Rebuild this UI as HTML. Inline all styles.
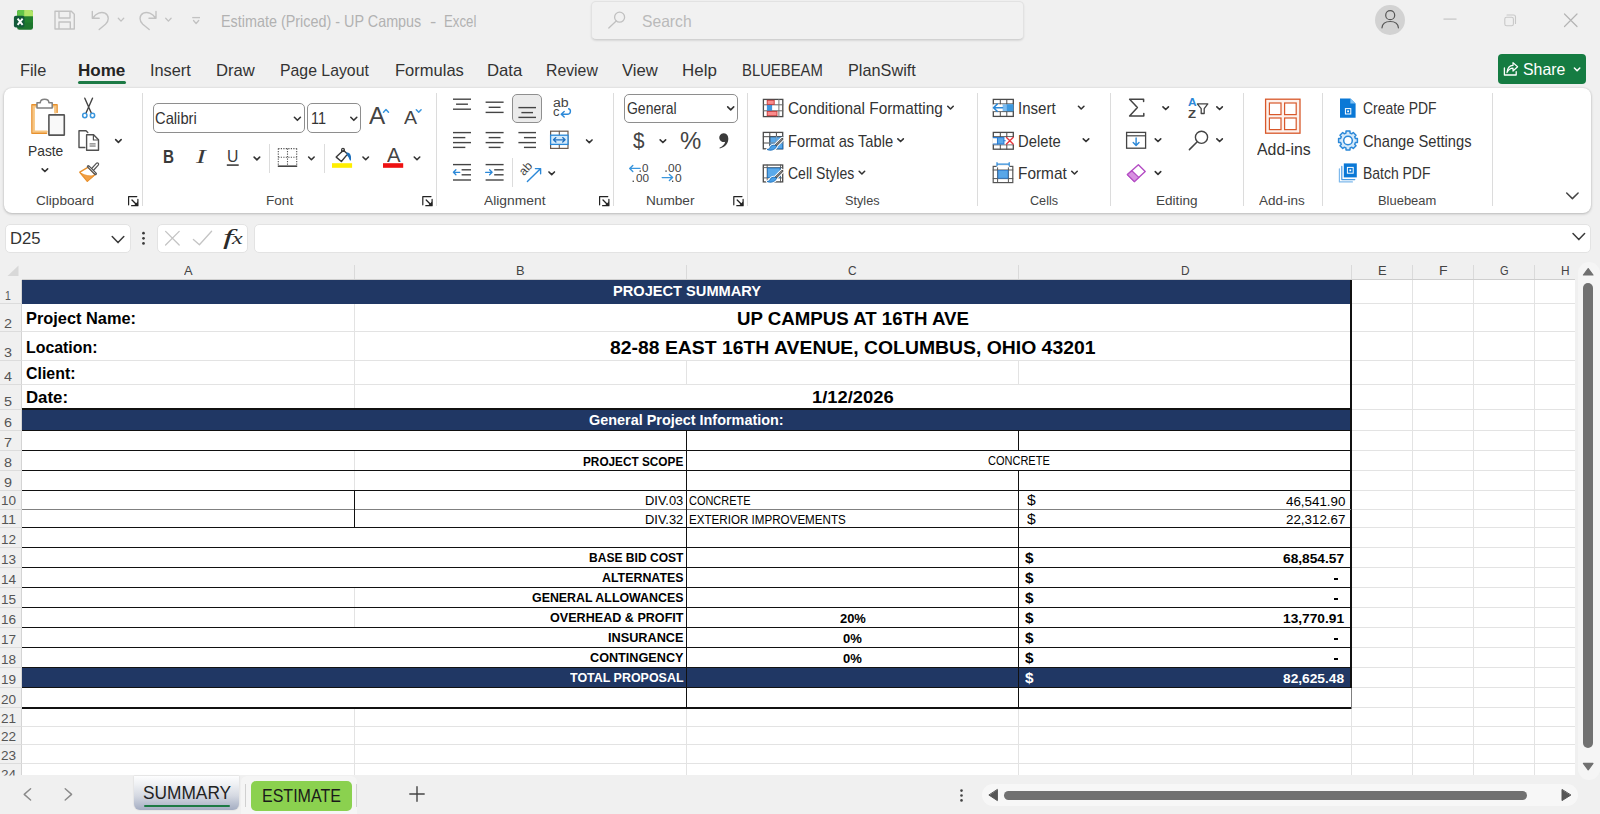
<!DOCTYPE html>
<html lang="en"><head><meta charset="utf-8"><title>Estimate (Priced) - UP Campus - Excel</title>
<style>
html,body{margin:0;padding:0}
body{width:1600px;height:814px;overflow:hidden;background:#f0f0f0;font-family:"Liberation Sans",sans-serif;position:relative}
#app{position:absolute;left:0;top:0;width:1600px;height:814px;overflow:hidden}
#app div{position:absolute;box-sizing:border-box}
.t{position:absolute;white-space:pre;line-height:1;transform-origin:0 0;display:block}
svg.ov{position:absolute;left:0;top:0;pointer-events:none}
</style></head>
<body><div id="app">
<div style="left:591px;top:0.5px;width:433px;height:39.5px;background:#f1f1f1;border:1px solid #e2e2e2;border-bottom-color:#d2d2d2;border-radius:5px;box-shadow:0 1px 2px rgba(0,0,0,.10)"></div>
<div style="left:78px;top:81px;width:48px;height:3px;background:#1d7a45;border-radius:1.5px"></div>
<div style="left:1498px;top:54px;width:88px;height:30px;background:#157c42;border-radius:4px"></div>
<div style="left:4px;top:88px;width:1587px;height:125px;background:#fff;border-radius:8px;box-shadow:0 1px 3px rgba(0,0,0,.22),0 0 2px rgba(0,0,0,.10)"></div>
<div style="left:142.0px;top:93px;width:1px;height:113px;background:#dcdcdc"></div>
<div style="left:436.0px;top:93px;width:1px;height:113px;background:#dcdcdc"></div>
<div style="left:613.0px;top:93px;width:1px;height:113px;background:#dcdcdc"></div>
<div style="left:747.0px;top:93px;width:1px;height:113px;background:#dcdcdc"></div>
<div style="left:977.0px;top:93px;width:1px;height:113px;background:#dcdcdc"></div>
<div style="left:1110.0px;top:93px;width:1px;height:113px;background:#dcdcdc"></div>
<div style="left:1242.5px;top:93px;width:1px;height:113px;background:#dcdcdc"></div>
<div style="left:1322.0px;top:93px;width:1px;height:113px;background:#dcdcdc"></div>
<div style="left:1492.0px;top:93px;width:1px;height:113px;background:#dcdcdc"></div>
<div style="left:4.5px;top:223.5px;width:126px;height:29px;background:#fff;border:1px solid #e3e3e3;border-radius:5px"></div>
<div style="left:157px;top:223.5px;width:91px;height:29px;background:#fff;border:1px solid #e3e3e3;border-radius:5px"></div>
<div style="left:253.5px;top:223.5px;width:1337.5px;height:29px;background:#fff;border:1px solid #e3e3e3;border-radius:5px"></div>
<div style="left:22px;top:280px;width:1553px;height:495px;background:#fff"></div>
<div style="left:0px;top:263px;width:1600px;height:17px;background:#f0f0f0"></div>
<div style="left:354px;top:280px;width:1px;height:495px;background:#e3e3e3"></div>
<div style="left:686px;top:280px;width:1px;height:495px;background:#e3e3e3"></div>
<div style="left:1018px;top:280px;width:1px;height:495px;background:#e3e3e3"></div>
<div style="left:1351px;top:280px;width:1px;height:495px;background:#e3e3e3"></div>
<div style="left:1412px;top:280px;width:1px;height:495px;background:#e3e3e3"></div>
<div style="left:1473px;top:280px;width:1px;height:495px;background:#e3e3e3"></div>
<div style="left:1534px;top:280px;width:1px;height:495px;background:#e3e3e3"></div>
<div style="left:22px;top:303px;width:1553px;height:1px;background:#e3e3e3"></div>
<div style="left:22px;top:331px;width:1553px;height:1px;background:#e3e3e3"></div>
<div style="left:22px;top:360px;width:1553px;height:1px;background:#e3e3e3"></div>
<div style="left:22px;top:384px;width:1553px;height:1px;background:#e3e3e3"></div>
<div style="left:22px;top:409px;width:1553px;height:1px;background:#e3e3e3"></div>
<div style="left:22px;top:430px;width:1553px;height:1px;background:#e3e3e3"></div>
<div style="left:22px;top:450px;width:1553px;height:1px;background:#e3e3e3"></div>
<div style="left:22px;top:470px;width:1553px;height:1px;background:#e3e3e3"></div>
<div style="left:22px;top:490px;width:1553px;height:1px;background:#e3e3e3"></div>
<div style="left:22px;top:508.6px;width:1553px;height:1px;background:#e3e3e3"></div>
<div style="left:22px;top:527px;width:1553px;height:1px;background:#e3e3e3"></div>
<div style="left:22px;top:547px;width:1553px;height:1px;background:#e3e3e3"></div>
<div style="left:22px;top:567px;width:1553px;height:1px;background:#e3e3e3"></div>
<div style="left:22px;top:587px;width:1553px;height:1px;background:#e3e3e3"></div>
<div style="left:22px;top:607px;width:1553px;height:1px;background:#e3e3e3"></div>
<div style="left:22px;top:627px;width:1553px;height:1px;background:#e3e3e3"></div>
<div style="left:22px;top:647px;width:1553px;height:1px;background:#e3e3e3"></div>
<div style="left:22px;top:667px;width:1553px;height:1px;background:#e3e3e3"></div>
<div style="left:22px;top:687px;width:1553px;height:1px;background:#e3e3e3"></div>
<div style="left:22px;top:707px;width:1553px;height:1px;background:#e3e3e3"></div>
<div style="left:22px;top:726px;width:1553px;height:1px;background:#e3e3e3"></div>
<div style="left:22px;top:744px;width:1553px;height:1px;background:#e3e3e3"></div>
<div style="left:22px;top:763px;width:1553px;height:1px;background:#e3e3e3"></div>
<div style="left:22px;top:279px;width:1553px;height:1px;background:#cfcfcf"></div>
<div style="left:21px;top:280px;width:1px;height:495px;background:#d4d4d4"></div>
<div style="left:354px;top:265px;width:1px;height:14px;background:#dadada"></div>
<div style="left:686px;top:265px;width:1px;height:14px;background:#dadada"></div>
<div style="left:1018px;top:265px;width:1px;height:14px;background:#dadada"></div>
<div style="left:1351px;top:265px;width:1px;height:14px;background:#dadada"></div>
<div style="left:1412px;top:265px;width:1px;height:14px;background:#dadada"></div>
<div style="left:1473px;top:265px;width:1px;height:14px;background:#dadada"></div>
<div style="left:1534px;top:265px;width:1px;height:14px;background:#dadada"></div>
<div style="left:0px;top:303px;width:22px;height:1px;background:#dcdcdc"></div>
<div style="left:0px;top:331px;width:22px;height:1px;background:#dcdcdc"></div>
<div style="left:0px;top:360px;width:22px;height:1px;background:#dcdcdc"></div>
<div style="left:0px;top:384px;width:22px;height:1px;background:#dcdcdc"></div>
<div style="left:0px;top:409px;width:22px;height:1px;background:#dcdcdc"></div>
<div style="left:0px;top:430px;width:22px;height:1px;background:#dcdcdc"></div>
<div style="left:0px;top:450px;width:22px;height:1px;background:#dcdcdc"></div>
<div style="left:0px;top:470px;width:22px;height:1px;background:#dcdcdc"></div>
<div style="left:0px;top:490px;width:22px;height:1px;background:#dcdcdc"></div>
<div style="left:0px;top:508.6px;width:22px;height:1px;background:#dcdcdc"></div>
<div style="left:0px;top:527px;width:22px;height:1px;background:#dcdcdc"></div>
<div style="left:0px;top:547px;width:22px;height:1px;background:#dcdcdc"></div>
<div style="left:0px;top:567px;width:22px;height:1px;background:#dcdcdc"></div>
<div style="left:0px;top:587px;width:22px;height:1px;background:#dcdcdc"></div>
<div style="left:0px;top:607px;width:22px;height:1px;background:#dcdcdc"></div>
<div style="left:0px;top:627px;width:22px;height:1px;background:#dcdcdc"></div>
<div style="left:0px;top:647px;width:22px;height:1px;background:#dcdcdc"></div>
<div style="left:0px;top:667px;width:22px;height:1px;background:#dcdcdc"></div>
<div style="left:0px;top:687px;width:22px;height:1px;background:#dcdcdc"></div>
<div style="left:0px;top:707px;width:22px;height:1px;background:#dcdcdc"></div>
<div style="left:0px;top:726px;width:22px;height:1px;background:#dcdcdc"></div>
<div style="left:0px;top:744px;width:22px;height:1px;background:#dcdcdc"></div>
<div style="left:0px;top:763px;width:22px;height:1px;background:#dcdcdc"></div>
<div style="left:22px;top:280px;width:1329px;height:24px;background:#203764"></div>
<div style="left:22px;top:410px;width:1329px;height:21px;background:#203764"></div>
<div style="left:22px;top:668px;width:1329px;height:20px;background:#203764"></div>
<div style="left:355px;top:304px;width:995px;height:27px;background:#fff"></div>
<div style="left:355px;top:332px;width:995px;height:28px;background:#fff"></div>
<div style="left:355px;top:385px;width:995px;height:23px;background:#fff"></div>
<div style="left:23px;top:431px;width:995px;height:19px;background:#fff"></div>
<div style="left:687px;top:451px;width:663px;height:19px;background:#fff"></div>
<div style="left:23px;top:528px;width:663px;height:19px;background:#fff"></div>
<div style="left:23px;top:548px;width:663px;height:19px;background:#fff"></div>
<div style="left:23px;top:568px;width:663px;height:19px;background:#fff"></div>
<div style="left:23px;top:628px;width:663px;height:19px;background:#fff"></div>
<div style="left:23px;top:648px;width:663px;height:19px;background:#fff"></div>
<div style="left:23px;top:688px;width:663px;height:18.7px;background:#fff"></div>
<div style="left:22px;top:408px;width:1329px;height:2px;background:#111"></div>
<div style="left:22px;top:706.7px;width:1329px;height:2px;background:#111"></div>
<div style="left:1350px;top:280px;width:2px;height:408px;background:#111"></div>
<div style="left:1350.6px;top:688px;width:1.2px;height:20.700000000000045px;background:#808080"></div>
<div style="left:22px;top:430px;width:1329px;height:1px;background:#111"></div>
<div style="left:22px;top:450px;width:1329px;height:1px;background:#111"></div>
<div style="left:22px;top:470px;width:1329px;height:1px;background:#111"></div>
<div style="left:22px;top:490px;width:1329px;height:1px;background:#111"></div>
<div style="left:22px;top:527px;width:1329px;height:1px;background:#111"></div>
<div style="left:22px;top:547px;width:1329px;height:1px;background:#111"></div>
<div style="left:22px;top:567px;width:1329px;height:1px;background:#111"></div>
<div style="left:22px;top:587px;width:1329px;height:1px;background:#111"></div>
<div style="left:22px;top:607px;width:1329px;height:1px;background:#111"></div>
<div style="left:22px;top:627px;width:1329px;height:1px;background:#111"></div>
<div style="left:22px;top:647px;width:1329px;height:1px;background:#111"></div>
<div style="left:22px;top:667px;width:1329px;height:1px;background:#111"></div>
<div style="left:22px;top:687px;width:1329px;height:1px;background:#111"></div>
<div style="left:22px;top:508.6px;width:1329px;height:1px;background:#808080"></div>
<div style="left:686px;top:431px;width:1px;height:276px;background:#111"></div>
<div style="left:1018px;top:431px;width:1px;height:20px;background:#111"></div>
<div style="left:1018px;top:471px;width:1px;height:236px;background:#111"></div>
<div style="left:354px;top:490px;width:1px;height:38px;background:#111"></div>
<div style="left:1333.8px;top:578.2px;width:4.2px;height:1.9px;background:#000"></div>
<div style="left:1333.8px;top:598.2px;width:4.2px;height:1.9px;background:#000"></div>
<div style="left:1333.8px;top:638.2px;width:4.2px;height:1.9px;background:#000"></div>
<div style="left:1333.8px;top:658.2px;width:4.2px;height:1.9px;background:#000"></div>
<div style="left:0px;top:775px;width:1600px;height:39px;background:#f0f0f0"></div>
<div style="left:240.5px;top:775.5px;width:116.5px;height:38.5px;background:#f5f5f5;border-radius:6px 6px 0 0"></div>
<div style="left:133.5px;top:776px;width:105.5px;height:33.5px;background:linear-gradient(#fdfdfe 0%,#eef0f3 25%,#d5d9e2 58%,#a4adc2 100%);border-radius:0 0 6px 6px;box-shadow:0 0 1.5px rgba(0,0,0,.22)"></div>
<div style="left:143.8px;top:804.6px;width:86.4px;height:2.4px;background:#1d7a45;border-radius:1px"></div>
<div style="left:245px;top:784px;width:1px;height:23px;background:#d0d0d0"></div>
<div style="left:251px;top:781px;width:100.5px;height:29.5px;background:#8bd14f;border-radius:5px"></div>
<div style="left:356.2px;top:784px;width:1px;height:23px;background:#d0d0d0"></div>
<div style="left:982px;top:784px;width:596px;height:22px;background:#f7f7f7;border-radius:11px"></div>
<div style="left:1004px;top:790.5px;width:522.5px;height:9.5px;background:#717171;border-radius:5px"></div>
<div style="left:1578px;top:262px;width:22px;height:518px;background:#f5f5f5;border-radius:11px"></div>
<div style="left:1583.2px;top:283px;width:9.8px;height:465px;background:#717171;border-radius:5px"></div>
<div style="left:153px;top:103px;width:151.5px;height:29.5px;background:#fff;border:1px solid #8e8e8e;border-radius:5px"></div>
<div style="left:307.3px;top:103px;width:54px;height:29.5px;background:#fff;border:1px solid #8e8e8e;border-radius:5px"></div>
<div style="left:269px;top:143.5px;width:1px;height:29px;background:#dcdcdc"></div>
<div style="left:324.3px;top:143.5px;width:1px;height:29px;background:#dcdcdc"></div>
<div style="left:512.4px;top:93.6px;width:29.4px;height:29px;background:#ebebeb;border:1px solid #8f8f8f;border-radius:5px"></div>
<div style="left:512px;top:158px;width:1px;height:29px;background:#dcdcdc"></div>
<div style="left:624.4px;top:93.6px;width:113.4px;height:29px;background:#fff;border:1px solid #8e8e8e;border-radius:5px"></div>
<svg class="ov" width="1600" height="814" viewBox="0 0 1600 814">
<path d="M18.5 265.5L18.5 276L7.5 276Z" fill="#d8d8d8"/>
<g><rect x="17.1" y="9.9" width="15.9" height="19.9" rx="2.2" fill="#1d762d"/><path d="M19.3 9.9H24.1V16.6H17.1V12.1A2.2 2.2 0 0 1 19.3 9.9Z" fill="#62c649"/><path d="M24.1 9.9H30.8A2.2 2.2 0 0 1 33 12.1V16.6H24.1Z" fill="#b0e566"/><rect x="24.1" y="16.6" width="8.9" height="6" fill="#21802f"/><rect x="13.9" y="15.8" width="10.6" height="11.8" rx="2" fill="#135a3a"/><path d="M17.6 18.7L22.6 24.8M22.6 18.7L17.6 24.8" stroke="#fff" stroke-width="1.9" fill="none"/></g>
<path d="M55 11.2H71.3L74.3 14.2V29H55ZM59 11.2V18H70V11.2M59 29V22H70.3V29" fill="none" stroke="#c2c2c2" stroke-width="1.4" stroke-linejoin="round" stroke-linecap="round" />
<path d="M92.3 11.5V18.3H99.2M92.8 18C96 13.6 101 11.2 105 13.2C109.5 15.6 109 21 105.5 24.2L99.2 29.5" fill="none" stroke="#c2c2c2" stroke-width="1.4" stroke-linejoin="round" stroke-linecap="round" />
<path d="M118.30 18.25L121.00 21.15L123.70 18.25" fill="none" stroke="#c2c2c2" stroke-width="1.3" stroke-linecap="round" stroke-linejoin="round"/>
<path d="M156 11.5V18.3H149M155.6 18C152.4 13.6 147.4 11.2 143.3 13.2C138.8 15.6 139.3 21 142.8 24.2L149.2 29.5" fill="none" stroke="#c2c2c2" stroke-width="1.4" stroke-linejoin="round" stroke-linecap="round" />
<path d="M165.70 18.25L168.40 21.15L171.10 18.25" fill="none" stroke="#c2c2c2" stroke-width="1.3" stroke-linecap="round" stroke-linejoin="round"/>
<path d="M192.2 17.6L200 17.6" stroke="#c2c2c2" stroke-width="1.3" stroke-linecap="butt" fill="none"/>
<path d="M193.50 20.55L196.10 23.45L198.70 20.55" fill="none" stroke="#c2c2c2" stroke-width="1.3" stroke-linecap="round" stroke-linejoin="round"/>
<circle cx="619.6" cy="17.2" r="5" fill="none" stroke="#c0c0c0" stroke-width="1.3"/>
<path d="M616.2 21L608.8 28" stroke="#c0c0c0" stroke-width="1.3" stroke-linecap="round" fill="none"/>
<circle cx="1390" cy="20" r="15" fill="#d2d2d2"/>
<circle cx="1390.2" cy="15.2" r="4.5" fill="none" stroke="#555" stroke-width="1.2"/>
<path d="M1382 27.8C1382.4 23 1385.6 21.5 1390.2 21.5C1394.8 21.5 1398 23 1398.4 27.8" fill="none" stroke="#555" stroke-width="1.2" stroke-linejoin="round" stroke-linecap="round" />
<path d="M1443.5 19.1L1456.5 19.1" stroke="#c4c4c4" stroke-width="1.2" stroke-linecap="butt" fill="none"/>
<rect x="1504.8" y="17.2" width="8.6" height="8.6" fill="none" stroke="#c8c8c8" stroke-width="1.1" rx="1.8" />
<path d="M1507 15H1513.5A2 2 0 0 1 1515.5 17V23.5" fill="none" stroke="#c8c8c8" stroke-width="1.1" stroke-linejoin="round" stroke-linecap="round" />
<path d="M1564.5 14L1577 26.5M1577 14L1564.5 26.5" fill="none" stroke="#b4b4b4" stroke-width="1.2" stroke-linejoin="round" stroke-linecap="round" />
<path d="M1504.4 68V75H1516.2V71.6" fill="none" stroke="#fff" stroke-width="1.3" stroke-linejoin="round" stroke-linecap="round" stroke-linecap="butt" stroke-linejoin="miter"/>
<path d="M1507 72.6C1507.4 68.2 1509.6 65.6 1513 65.4V62.6L1517.6 66.8L1513 71V68.2C1510.6 68.2 1508.6 69.4 1507 72.6Z" fill="none" stroke="#fff" stroke-width="1.2" stroke-linejoin="round" stroke-linecap="round" />
<path d="M1574.40 68.00L1577.10 70.80L1579.80 68.00" fill="none" stroke="#fff" stroke-width="1.5" stroke-linecap="round" stroke-linejoin="round"/>
<path d="M36.6 106.3H33.7V131.6H46.6" fill="none" stroke="#f8c681" stroke-width="2.4" stroke-linejoin="round" stroke-linecap="round" stroke-linecap="butt"/>
<path d="M36.6 104.7H31.9V133.2H46.6" fill="none" stroke="#e8912d" stroke-width="1.4" stroke-linejoin="round" stroke-linecap="round" />
<path d="M52.6 106.3H55.3V112.4" fill="none" stroke="#f8c681" stroke-width="2.4" stroke-linejoin="round" stroke-linecap="round" />
<path d="M52.6 104.7H57.1V112.4" fill="none" stroke="#e8912d" stroke-width="1.4" stroke-linejoin="round" stroke-linecap="round" />
<path d="M37 108H52.2V102.8H48.9C48.9 100.6 47.2 99.3 44.6 99.3C42 99.3 40.3 100.6 40.3 102.8H37Z" fill="#fff" stroke="#808080" stroke-width="1.5" stroke-linejoin="round" stroke-linecap="round" />
<rect x="48.9" y="114.9" width="15.4" height="20.2" fill="#f9f9f9" stroke="#555" stroke-width="1.6" rx="0.4" />
<path d="M42.15 168.85L44.90 171.55L47.65 168.85" fill="none" stroke="#333" stroke-width="1.6" stroke-linecap="round" stroke-linejoin="round"/>
<path d="M84.8 98.2L91.4 113.2M92.5 98.2L85.9 113.2" fill="none" stroke="#444" stroke-width="1.4" stroke-linejoin="round" stroke-linecap="round" />
<circle cx="84.8" cy="115.5" r="2.15" fill="#fff" stroke="#3a96dd" stroke-width="1.5"/>
<circle cx="92.5" cy="115.5" r="2.15" fill="#fff" stroke="#3a96dd" stroke-width="1.5"/>
<path d="M84.8 147.5H79V130.7H86L87.8 132.5" fill="none" stroke="#505050" stroke-width="1.4" stroke-linejoin="round" stroke-linecap="round" />
<path d="M86.6 134.7H93.6L98.5 139.7V150.3H86.6Z" fill="#fff" stroke="#505050" stroke-width="1.4" stroke-linejoin="round" stroke-linecap="round" />
<path d="M93.4 135V140H98.4" fill="none" stroke="#505050" stroke-width="1.2" stroke-linejoin="round" stroke-linecap="round" />
<rect x="89.6" y="143" width="6" height="4" fill="#9a9a9a" stroke="none" stroke-width="1" rx="0" />
<path d="M89.6 144.4H95.6M89.6 145.9H95.6" fill="none" stroke="#e8e8e8" stroke-width="0.5" stroke-linejoin="round" stroke-linecap="round" />
<path d="M115.65 139.65L118.40 142.35L121.15 139.65" fill="none" stroke="#333" stroke-width="1.6" stroke-linecap="round" stroke-linejoin="round"/>
<path d="M88.2 167.2L79.8 172.2L87.3 181.2L95 174.4Z" fill="#fff" stroke="#e8912d" stroke-width="1.4" stroke-linejoin="round" stroke-linecap="round" />
<path d="M81.6 173.6L87.3 181.2L94.3 175.4C90 176.6 85.6 175.6 81.6 173.6Z" fill="#f2a044" stroke="#e8912d" stroke-width="0.8" stroke-linejoin="round" stroke-linecap="round" />
<path d="M92.4 169.6L97.3 164.2" fill="none" stroke="#555" stroke-width="3.8" stroke-linejoin="round" stroke-linecap="round" />
<path d="M92.4 169.6L97.3 164.2" fill="none" stroke="#fff" stroke-width="1.4" stroke-linejoin="round" stroke-linecap="round" />
<path d="M88.3 166.5L95.5 173.7" fill="none" stroke="#555" stroke-width="3" stroke-linejoin="round" stroke-linecap="round" stroke-linecap="butt"/>
<path d="M88.8 167L95 173.2" fill="none" stroke="#e6e6e6" stroke-width="0.9" stroke-linejoin="round" stroke-linecap="round" />
<path d="M128.6 204.8V196.6H136.8" fill="none" stroke="#222" stroke-width="1.2" stroke-linejoin="round" stroke-linecap="round" stroke-linecap="butt"/>
<path d="M132 200L137.2 205.2" fill="none" stroke="#222" stroke-width="1.3" stroke-linejoin="round" stroke-linecap="round" />
<path d="M137.9 199.4V205.7H131.6" fill="none" stroke="#222" stroke-width="1.2" stroke-linejoin="round" stroke-linecap="round" stroke-linecap="butt" stroke-linejoin="miter"/>
<path d="M137.9 201.4V205.7H133.6Z" fill="#222" stroke="none" stroke-width="1.5" stroke-linejoin="round" stroke-linecap="round" />
<path d="M422.8 204.8V196.6H431.0" fill="none" stroke="#222" stroke-width="1.2" stroke-linejoin="round" stroke-linecap="round" stroke-linecap="butt"/>
<path d="M426.2 200L431.4 205.2" fill="none" stroke="#222" stroke-width="1.3" stroke-linejoin="round" stroke-linecap="round" />
<path d="M432.09999999999997 199.4V205.7H425.8" fill="none" stroke="#222" stroke-width="1.2" stroke-linejoin="round" stroke-linecap="round" stroke-linecap="butt" stroke-linejoin="miter"/>
<path d="M432.09999999999997 201.4V205.7H427.8Z" fill="#222" stroke="none" stroke-width="1.5" stroke-linejoin="round" stroke-linecap="round" />
<path d="M599.6 204.8V196.6H607.8" fill="none" stroke="#222" stroke-width="1.2" stroke-linejoin="round" stroke-linecap="round" stroke-linecap="butt"/>
<path d="M603 200L608.2 205.2" fill="none" stroke="#222" stroke-width="1.3" stroke-linejoin="round" stroke-linecap="round" />
<path d="M608.9 199.4V205.7H602.6" fill="none" stroke="#222" stroke-width="1.2" stroke-linejoin="round" stroke-linecap="round" stroke-linecap="butt" stroke-linejoin="miter"/>
<path d="M608.9 201.4V205.7H604.6Z" fill="#222" stroke="none" stroke-width="1.5" stroke-linejoin="round" stroke-linecap="round" />
<path d="M733.8000000000001 204.8V196.6H742.0" fill="none" stroke="#222" stroke-width="1.2" stroke-linejoin="round" stroke-linecap="round" stroke-linecap="butt"/>
<path d="M737.2 200L742.4000000000001 205.2" fill="none" stroke="#222" stroke-width="1.3" stroke-linejoin="round" stroke-linecap="round" />
<path d="M743.1 199.4V205.7H736.8000000000001" fill="none" stroke="#222" stroke-width="1.2" stroke-linejoin="round" stroke-linecap="round" stroke-linecap="butt" stroke-linejoin="miter"/>
<path d="M743.1 201.4V205.7H738.8000000000001Z" fill="#222" stroke="none" stroke-width="1.5" stroke-linejoin="round" stroke-linecap="round" />
<path d="M294.40 117.30L297.40 120.30L300.40 117.30" fill="none" stroke="#333" stroke-width="1.6" stroke-linecap="round" stroke-linejoin="round"/>
<path d="M350.80 117.30L353.80 120.30L356.80 117.30" fill="none" stroke="#333" stroke-width="1.6" stroke-linecap="round" stroke-linejoin="round"/>
<path d="M383.5 112.2L386 109.6L388.5 112.2" fill="none" stroke="#3a96dd" stroke-width="1.5" stroke-linejoin="round" stroke-linecap="round" />
<path d="M416.3 109.8L418.7 112.3L421.1 109.8" fill="none" stroke="#3a96dd" stroke-width="1.5" stroke-linejoin="round" stroke-linecap="round" />
<path d="M226.8 165.1L238.7 165.1" stroke="#4a4a4a" stroke-width="1.7" stroke-linecap="butt" fill="none"/>
<path d="M254.15 157.15L256.90 159.85L259.65 157.15" fill="none" stroke="#333" stroke-width="1.6" stroke-linecap="round" stroke-linejoin="round"/>
<g stroke="#555" stroke-width="1.1" fill="none" stroke-dasharray="1.2 1.3"><path d="M278.3 148.6H296.7M278.3 148.6V165M296.7 148.6V165M287.5 148.6V165M278.3 157.2H296.7"/></g>
<path d="M277.8 166.2L297.2 166.2" stroke="#444" stroke-width="1.6" stroke-linecap="butt" fill="none"/>
<path d="M308.65 157.05L311.40 159.75L314.15 157.05" fill="none" stroke="#333" stroke-width="1.6" stroke-linecap="round" stroke-linejoin="round"/>
<path d="M343.4 150.2L336.2 157.1L341.4 161.5L347.5 154.1Z" fill="#fff" stroke="#3a3a3a" stroke-width="1.4" stroke-linejoin="round" stroke-linecap="round" />
<path d="M341.6 152V149.8A1.4 1.4 0 0 1 344.4 149.8V151" fill="none" stroke="#3a3a3a" stroke-width="1.2" stroke-linejoin="round" stroke-linecap="round" />
<path d="M346.8 153.1C349.6 152.7 350.8 155.4 350.4 160C349.6 158 348.8 156.4 347.6 155.2" fill="#1e6fba" stroke="#1e6fba" stroke-width="1.2" stroke-linejoin="round" stroke-linecap="round" />
<rect x="332" y="163.2" width="20.1" height="4.6" fill="#ffee00" stroke="none" stroke-width="1" rx="0" />
<path d="M362.95 157.05L365.70 159.75L368.45 157.05" fill="none" stroke="#333" stroke-width="1.6" stroke-linecap="round" stroke-linejoin="round"/>
<rect x="383" y="163.2" width="20.2" height="4.6" fill="#ee1111" stroke="none" stroke-width="1" rx="0" />
<path d="M414.25 157.05L417.00 159.75L419.75 157.05" fill="none" stroke="#333" stroke-width="1.6" stroke-linecap="round" stroke-linejoin="round"/>
<path d="M453.00 99.2L471.00 99.2" stroke="#444" stroke-width="1.4" stroke-linecap="butt" fill="none"/>
<path d="M456.06 104.2L467.94 104.2" stroke="#444" stroke-width="1.4" stroke-linecap="butt" fill="none"/>
<path d="M453.00 109.2L471.00 109.2" stroke="#444" stroke-width="1.4" stroke-linecap="butt" fill="none"/>
<path d="M485.60 102.2L503.60 102.2" stroke="#444" stroke-width="1.4" stroke-linecap="butt" fill="none"/>
<path d="M488.66 107.3L500.54 107.3" stroke="#444" stroke-width="1.4" stroke-linecap="butt" fill="none"/>
<path d="M485.60 112.4L503.60 112.4" stroke="#444" stroke-width="1.4" stroke-linecap="butt" fill="none"/>
<path d="M518.40 107.6L536.00 107.6" stroke="#444" stroke-width="1.4" stroke-linecap="butt" fill="none"/>
<path d="M521.39 112.6L533.01 112.6" stroke="#444" stroke-width="1.4" stroke-linecap="butt" fill="none"/>
<path d="M518.40 117.4L536.00 117.4" stroke="#444" stroke-width="1.4" stroke-linecap="butt" fill="none"/>
<path d="M568.6 108.8C571.2 109.4 571.2 114.3 567.4 114.3H561.4M564.2 111.5L561.2 114.3L564.2 117.1" fill="none" stroke="#2b88d8" stroke-width="1.4" stroke-linejoin="round" stroke-linecap="round" />
<path d="M453.00 132.6L471.00 132.6" stroke="#444" stroke-width="1.4" stroke-linecap="butt" fill="none"/>
<path d="M453.00 137.6L465.34 137.6" stroke="#444" stroke-width="1.4" stroke-linecap="butt" fill="none"/>
<path d="M453.00 142.6L471.00 142.6" stroke="#444" stroke-width="1.4" stroke-linecap="butt" fill="none"/>
<path d="M453.00 147.4L465.34 147.4" stroke="#444" stroke-width="1.4" stroke-linecap="butt" fill="none"/>
<path d="M485.60 132.6L503.60 132.6" stroke="#444" stroke-width="1.4" stroke-linecap="butt" fill="none"/>
<path d="M488.66 137.6L500.54 137.6" stroke="#444" stroke-width="1.4" stroke-linecap="butt" fill="none"/>
<path d="M485.60 142.6L503.60 142.6" stroke="#444" stroke-width="1.4" stroke-linecap="butt" fill="none"/>
<path d="M488.66 147.4L500.54 147.4" stroke="#444" stroke-width="1.4" stroke-linecap="butt" fill="none"/>
<path d="M518.40 132.6L536.00 132.6" stroke="#444" stroke-width="1.4" stroke-linecap="butt" fill="none"/>
<path d="M523.94 137.6L536.00 137.6" stroke="#444" stroke-width="1.4" stroke-linecap="butt" fill="none"/>
<path d="M518.40 142.6L536.00 142.6" stroke="#444" stroke-width="1.4" stroke-linecap="butt" fill="none"/>
<path d="M523.94 147.4L536.00 147.4" stroke="#444" stroke-width="1.4" stroke-linecap="butt" fill="none"/>
<rect x="550.6" y="131.2" width="17.4" height="17.2" fill="#fff" stroke="#6b5a50" stroke-width="1.2" rx="0" />
<path d="M559.3 131.2V135.2M559.3 144.4V148.4" fill="none" stroke="#6b5a50" stroke-width="1.1" stroke-linejoin="round" stroke-linecap="round" />
<rect x="550.6" y="135.2" width="17.4" height="9.2" fill="#d6eafa" stroke="#2b88d8" stroke-width="1.3" rx="0" />
<path d="M553.6 139.8H565M555.9 137.6L553.5 139.8L555.9 142M562.7 137.6L565.1 139.8L562.7 142" fill="none" stroke="#1f6fbf" stroke-width="1.3" stroke-linejoin="round" stroke-linecap="round" />
<path d="M586.55 139.95L589.30 142.65L592.05 139.95" fill="none" stroke="#333" stroke-width="1.6" stroke-linecap="round" stroke-linejoin="round"/>
<path d="M453 164.6L471 164.6" stroke="#444" stroke-width="1.4" stroke-linecap="butt" fill="none"/>
<path d="M453 180L471 180" stroke="#444" stroke-width="1.4" stroke-linecap="butt" fill="none"/>
<path d="M461.6 169.8L471 169.8" stroke="#444" stroke-width="1.4" stroke-linecap="butt" fill="none"/>
<path d="M461.6 174.8L471 174.8" stroke="#444" stroke-width="1.4" stroke-linecap="butt" fill="none"/>
<path d="M453.4 172.3H459.8M455.9 169.8L453.4 172.3L455.9 174.8" fill="none" stroke="#2b88d8" stroke-width="1.3" stroke-linejoin="round" stroke-linecap="round" />
<path d="M485.6 164.6L503.6 164.6" stroke="#444" stroke-width="1.4" stroke-linecap="butt" fill="none"/>
<path d="M485.6 180L503.6 180" stroke="#444" stroke-width="1.4" stroke-linecap="butt" fill="none"/>
<path d="M494.20000000000005 169.8L503.6 169.8" stroke="#444" stroke-width="1.4" stroke-linecap="butt" fill="none"/>
<path d="M494.20000000000005 174.8L503.6 174.8" stroke="#444" stroke-width="1.4" stroke-linecap="butt" fill="none"/>
<path d="M485.6 172.3H492.0M489.6 169.8L492.1 172.3L489.6 174.8" fill="none" stroke="#2b88d8" stroke-width="1.3" stroke-linejoin="round" stroke-linecap="round" />
<text x="0" y="0" font-family="Liberation Sans,sans-serif" font-size="12" fill="#444" transform="translate(524 176.2) rotate(-48)">ab</text>
<path d="M527.4 181.4L540.2 169M535.4 168.6L540.6 168.6L540.6 173.8" fill="none" stroke="#2b88d8" stroke-width="1.4" stroke-linejoin="round" stroke-linecap="round" />
<path d="M548.95 171.95L551.70 174.65L554.45 171.95" fill="none" stroke="#333" stroke-width="1.6" stroke-linecap="round" stroke-linejoin="round"/>
<path d="M727.70 106.90L730.70 109.90L733.70 106.90" fill="none" stroke="#333" stroke-width="1.6" stroke-linecap="round" stroke-linejoin="round"/>
<path d="M660.15 139.85L662.90 142.55L665.65 139.85" fill="none" stroke="#333" stroke-width="1.6" stroke-linecap="round" stroke-linejoin="round"/>
<path d="M723.4 133.3A4.4 4.4 0 1 0 725.2 141.8C724.6 144.6 722.4 146.6 719.4 147.8L719.8 148.5C725.4 147 728.6 143 728.3 138.2C728.1 135.2 726.2 133.3 723.4 133.3Z" fill="#3a3a3a" stroke="none" stroke-width="1.5" stroke-linejoin="round" stroke-linecap="round" />
<path d="M629.8 168.4H640M632.8 165.4L629.7 168.4L632.8 171.4" fill="none" stroke="#3a96dd" stroke-width="1.4" stroke-linejoin="round" stroke-linecap="round" />
<rect x="639.6" y="170.4" width="1.3" height="1.4" fill="#444" stroke="none" stroke-width="1" rx="0" />
<rect x="632.6" y="180.6" width="1.3" height="1.4" fill="#444" stroke="none" stroke-width="1" rx="0" />
<rect x="665.4" y="170.4" width="1.3" height="1.4" fill="#444" stroke="none" stroke-width="1" rx="0" />
<path d="M662.2 177.6H672.6M669.4 174.6L672.6 177.6L669.4 180.6" fill="none" stroke="#3a96dd" stroke-width="1.4" stroke-linejoin="round" stroke-linecap="round" />
<rect x="672" y="180.6" width="1.3" height="1.4" fill="#444" stroke="none" stroke-width="1" rx="0" />
<rect x="763.4" y="99.4" width="19.4" height="17.2" fill="#fff" stroke="#4a4a4a" stroke-width="1.3" rx="0" />
<path d="M763.4 104.80000000000001H782.8M763.4 110.80000000000001H782.8" fill="none" stroke="#666" stroke-width="1" stroke-linejoin="round" stroke-linecap="round" />
<path d="M778.9 99.4V116.60000000000001" fill="none" stroke="#777" stroke-width="1" stroke-linejoin="round" stroke-linecap="round" />
<rect x="767.1999999999999" y="100.30000000000001" width="7" height="4.1" fill="#fa8c8c" stroke="#c43a3a" stroke-width="0.9" rx="0" />
<rect x="767.1999999999999" y="105.4" width="4.6" height="4.9" fill="#3d98de" stroke="#2b7cd3" stroke-width="0.6" rx="0" />
<rect x="767.1999999999999" y="111.4" width="9.8" height="4.3" fill="#fa8c8c" stroke="#c43a3a" stroke-width="0.9" rx="0" />
<path d="M947.75 106.25L950.50 108.95L953.25 106.25" fill="none" stroke="#333" stroke-width="1.6" stroke-linecap="round" stroke-linejoin="round"/>
<rect x="763.3" y="132.4" width="19.4" height="16.4" fill="#fff" stroke="#4a4a4a" stroke-width="1.3" rx="0" />
<rect x="769.8" y="136.70000000000002" width="12.9" height="12.1" fill="#5aa9ea" stroke="#1e6fba" stroke-width="0.9" rx="0" />
<path d="M769.8 132.4V148.8M776.4 132.4V148.8M763.3 136.70000000000002H782.6999999999999M763.3 143.0H782.6999999999999" fill="none" stroke="#4a4a4a" stroke-width="1" stroke-linejoin="round" stroke-linecap="round" />
<path d="M776.4 136.70000000000002V148.8M769.8 143.0H782.6999999999999" fill="none" stroke="#8cc3f0" stroke-width="0.8" stroke-linejoin="round" stroke-linecap="round" />
<path d="M782.3 139.0L775.3 146.0" fill="none" stroke="#fff" stroke-width="4.4" stroke-linejoin="round" stroke-linecap="round" />
<path d="M775.3 145.4C772.6999999999999 144.4 770.5 146.0 769.9 147.8C769.3 149.0 768.3 149.3 767.0999999999999 149.5C770.5 151.1 774.9 149.9 776.5 146.8Z" fill="#fff" stroke="#fff" stroke-width="2.6" stroke-linejoin="round" stroke-linecap="round" />
<path d="M782.3 139.0L775.6999999999999 145.6" fill="none" stroke="#4a4a4a" stroke-width="2.3" stroke-linejoin="round" stroke-linecap="round" />
<path d="M781.9 139.4L776.3 145.0" fill="none" stroke="#bdbdbd" stroke-width="0.7" stroke-linejoin="round" stroke-linecap="round" />
<path d="M775.3 145.4C772.6999999999999 144.4 770.5 146.0 769.9 147.8C769.3 149.0 768.3 149.3 767.0999999999999 149.5C770.5 151.1 774.9 149.9 776.5 146.8Z" fill="#4a9fe6" stroke="#1e6fba" stroke-width="0.9" stroke-linejoin="round" stroke-linecap="round" />
<path d="M897.85 138.85L900.60 141.55L903.35 138.85" fill="none" stroke="#333" stroke-width="1.6" stroke-linecap="round" stroke-linejoin="round"/>
<rect x="763.3" y="165" width="19.4" height="16.9" fill="#fff" stroke="#4a4a4a" stroke-width="1.3" rx="0" />
<path d="M767.1999999999999 165V181.9M780.5 165V181.9M763.3 167.6H782.6999999999999M763.3 177.9H782.6999999999999" fill="none" stroke="#5a5a5a" stroke-width="0.9" stroke-linejoin="round" stroke-linecap="round" />
<rect x="767.5999999999999" y="168" width="12.5" height="9.6" fill="#5aa9ea" stroke="#1e6fba" stroke-width="0.8" rx="0" />
<path d="M782.3 171.0L775.3 178.0" fill="none" stroke="#fff" stroke-width="4.4" stroke-linejoin="round" stroke-linecap="round" />
<path d="M775.3 177.4C772.6999999999999 176.4 770.5 178.0 769.9 179.8C769.3 181.0 768.3 181.3 767.0999999999999 181.5C770.5 183.1 774.9 181.9 776.5 178.8Z" fill="#fff" stroke="#fff" stroke-width="2.6" stroke-linejoin="round" stroke-linecap="round" />
<path d="M782.3 171.0L775.6999999999999 177.6" fill="none" stroke="#4a4a4a" stroke-width="2.3" stroke-linejoin="round" stroke-linecap="round" />
<path d="M781.9 171.4L776.3 177.0" fill="none" stroke="#bdbdbd" stroke-width="0.7" stroke-linejoin="round" stroke-linecap="round" />
<path d="M775.3 177.4C772.6999999999999 176.4 770.5 178.0 769.9 179.8C769.3 181.0 768.3 181.3 767.0999999999999 181.5C770.5 183.1 774.9 181.9 776.5 178.8Z" fill="#4a9fe6" stroke="#1e6fba" stroke-width="0.9" stroke-linejoin="round" stroke-linecap="round" />
<path d="M859.15 171.25L861.90 173.95L864.65 171.25" fill="none" stroke="#333" stroke-width="1.6" stroke-linecap="round" stroke-linejoin="round"/>
<rect x="993.3" y="99.4" width="20" height="17" fill="#fff" stroke="#4a4a4a" stroke-width="1.3" rx="0" />
<path d="M1000.3 99.4V116.4M1006.8 99.4V116.4M993.3 103.9H1013.3M993.3 111.60000000000001H1013.3" fill="none" stroke="#4a4a4a" stroke-width="1" stroke-linejoin="round" stroke-linecap="round" />
<rect x="1002.5" y="104.30000000000001" width="10.8" height="6.9" fill="#7cbcf0" stroke="none" stroke-width="1" rx="0" />
<rect x="1006.8" y="104.30000000000001" width="6.5" height="6.9" fill="#3d98de" stroke="none" stroke-width="1" rx="0" />
<rect x="992.3" y="104.4" width="10" height="6.8" fill="#fff" stroke="none" stroke-width="1" rx="0" />
<path d="M993.6999999999999 107.7H1002.5M997.1999999999999 104.10000000000001L993.5 107.7L997.1999999999999 111.30000000000001" fill="none" stroke="#2b88d8" stroke-width="1.6" stroke-linejoin="round" stroke-linecap="round" />
<path d="M1078.45 106.25L1081.20 108.95L1083.95 106.25" fill="none" stroke="#333" stroke-width="1.6" stroke-linecap="round" stroke-linejoin="round"/>
<rect x="993.3" y="132.4" width="20" height="16.8" fill="#fff" stroke="#4a4a4a" stroke-width="1.3" rx="0" />
<path d="M1000.3 132.4V149.20000000000002M1006.8 132.4V149.20000000000002M993.3 136.70000000000002H1013.3M993.3 144.8H1013.3" fill="none" stroke="#4a4a4a" stroke-width="1" stroke-linejoin="round" stroke-linecap="round" />
<rect x="992.3" y="137.3" width="22" height="7" fill="#fff" stroke="none" stroke-width="1" rx="0" />
<rect x="997.5" y="137.6" width="6.4" height="6.4" fill="#5aa9ea" stroke="#2b7cd3" stroke-width="1.1" rx="0" />
<path d="M993.3 137.6H997.5M993.3 144.0H997.5M1003.9 140.8H1005.3" fill="none" stroke="#2b7cd3" stroke-width="1.1" stroke-linejoin="round" stroke-linecap="round" />
<path d="M1006.5 137.6L1013.0999999999999 144.0M1013.0999999999999 137.6L1006.5 144.0" fill="none" stroke="#e8373d" stroke-width="1.4" stroke-linejoin="round" stroke-linecap="round" />
<path d="M1083.25 138.85L1086.00 141.55L1088.75 138.85" fill="none" stroke="#333" stroke-width="1.6" stroke-linecap="round" stroke-linejoin="round"/>
<rect x="993.2" y="166.4" width="19.6" height="16.2" fill="#fff" stroke="#555" stroke-width="1.2" rx="0" />
<path d="M997.6 166.4V182.6M1008.4000000000001 166.4V182.6M993.2 170.0H1012.8000000000001M993.2 178.6H1012.8000000000001" fill="none" stroke="#555" stroke-width="1" stroke-linejoin="round" stroke-linecap="round" />
<rect x="996.6" y="165.4" width="12.8" height="2" fill="#fff" stroke="none" stroke-width="1" rx="0" />
<rect x="998.0" y="170.4" width="10" height="7.8" fill="#5aa7e8" stroke="#2b7cd3" stroke-width="0.8" rx="0" />
<path d="M997.0 164.20000000000002H1009.2M997.0 162.6V165.8M1009.2 162.6V165.8" fill="none" stroke="#2b88d8" stroke-width="1.2" stroke-linejoin="round" stroke-linecap="round" />
<path d="M1071.75 171.25L1074.50 173.95L1077.25 171.25" fill="none" stroke="#333" stroke-width="1.6" stroke-linecap="round" stroke-linejoin="round"/>
<path d="M1143.6 101.6V99.2H1129.6L1137.4 107.6L1129.6 116H1143.8V113.4" fill="none" stroke="#444" stroke-width="1.5" stroke-linejoin="round" stroke-linecap="round" />
<path d="M1162.95 106.85L1165.70 109.55L1168.45 106.85" fill="none" stroke="#333" stroke-width="1.6" stroke-linecap="round" stroke-linejoin="round"/>
<path d="M1197.3 103.9H1207.8L1204.2 108.7V113.5H1201.2V108.7Z" fill="none" stroke="#444" stroke-width="1.3" stroke-linejoin="round" stroke-linecap="round" />
<path d="M1216.85 106.85L1219.60 109.55L1222.35 106.85" fill="none" stroke="#333" stroke-width="1.6" stroke-linecap="round" stroke-linejoin="round"/>
<rect x="1126.6" y="132.4" width="19" height="15.8" fill="#fff" stroke="#444" stroke-width="1.3" rx="0" />
<path d="M1126.6 135.8L1145.6 135.8" stroke="#444" stroke-width="1.2" stroke-linecap="butt" fill="none"/>
<path d="M1136.1 138V145.2M1133.2 142.4L1136.1 145.4L1139 142.4" fill="none" stroke="#2b88d8" stroke-width="1.4" stroke-linejoin="round" stroke-linecap="round" />
<path d="M1155.25 138.85L1158.00 141.55L1160.75 138.85" fill="none" stroke="#333" stroke-width="1.6" stroke-linecap="round" stroke-linejoin="round"/>
<circle cx="1201.5" cy="137.3" r="6.1" fill="none" stroke="#444" stroke-width="1.4"/>
<path d="M1197 142L1189.4 149.6" stroke="#444" stroke-width="1.5" stroke-linecap="round" fill="none"/>
<path d="M1216.85 138.85L1219.60 141.55L1222.35 138.85" fill="none" stroke="#333" stroke-width="1.6" stroke-linecap="round" stroke-linejoin="round"/>
<path d="M1127.4 174.6L1138.4 164.8L1145.2 171.4L1134.4 181.6Z" fill="#fff" stroke="#b44cc4" stroke-width="1.4" stroke-linejoin="round" stroke-linecap="round" />
<path d="M1127.4 174.6L1131.8 170.7L1138.8 177.4L1134.4 181.6Z" fill="#d792e0" stroke="#b44cc4" stroke-width="1.2" stroke-linejoin="round" stroke-linecap="round" />
<path d="M1155.25 171.65L1158.00 174.35L1160.75 171.65" fill="none" stroke="#333" stroke-width="1.6" stroke-linecap="round" stroke-linejoin="round"/>
<rect x="1265.6" y="99.2" width="34.4" height="34" fill="#fdf1ec" stroke="#d8582a" stroke-width="1.3" rx="0" />
<rect x="1269.4" y="103" width="11.6" height="11.6" fill="#fff" stroke="#d8582a" stroke-width="1.2" rx="0" />
<rect x="1284.6" y="103" width="11.6" height="11.6" fill="#fff" stroke="#d8582a" stroke-width="1.2" rx="0" />
<rect x="1269.4" y="118" width="11.6" height="11.6" fill="#fff" stroke="#d8582a" stroke-width="1.2" rx="0" />
<rect x="1284.6" y="118" width="11.6" height="11.6" fill="#fff" stroke="#d8582a" stroke-width="1.2" rx="0" />
<path d="M1340 98.4H1350.4L1355.6 103.6V117.8H1340Z" fill="#0a78d6" stroke="none" stroke-width="1.5" stroke-linejoin="round" stroke-linecap="round" />
<path d="M1350.4 98.4V103.6H1355.6Z" fill="#7fc0f2" stroke="none" stroke-width="1.5" stroke-linejoin="round" stroke-linecap="round" />
<rect x="1345.4" y="108.6" width="5.4" height="5.4" fill="none" stroke="#fff" stroke-width="1" rx="0" />
<rect x="1347.2" y="110.4" width="1.8" height="1.8" fill="#fff" stroke="none" stroke-width="1" rx="0" />
<path d="M1355.42 138.44L1357.40 138.55L1357.40 142.45L1355.42 142.56L1354.70 144.29L1356.02 145.77L1353.27 148.52L1351.79 147.20L1350.06 147.92L1349.95 149.90L1346.05 149.90L1345.94 147.92L1344.21 147.20L1342.73 148.52L1339.98 145.77L1341.30 144.29L1340.58 142.56L1338.60 142.45L1338.60 138.55L1340.58 138.44L1341.30 136.71L1339.98 135.23L1342.73 132.48L1344.21 133.80L1345.94 133.08L1346.05 131.10L1349.95 131.10L1350.06 133.08L1351.79 133.80L1353.27 132.48L1356.02 135.23L1354.70 136.71Z" fill="#d4e9fa" stroke="#2b88d8" stroke-width="1.5" stroke-linejoin="round" stroke-linecap="round" />
<circle cx="1348" cy="140.5" r="4.3" fill="#fff" stroke="#2b88d8" stroke-width="1.5"/>
<path d="M1339.4 168.8V181.9H1352.4" fill="none" stroke="#7fb9ec" stroke-width="1.2" stroke-linejoin="round" stroke-linecap="round" />
<path d="M1341.8 166.4V179.6H1354.8" fill="none" stroke="#4a9be3" stroke-width="1.2" stroke-linejoin="round" stroke-linecap="round" />
<rect x="1343.8" y="163.4" width="13" height="14" fill="#0a78d6" stroke="none" stroke-width="1" rx="0" />
<rect x="1347.4" y="167.4" width="5.8" height="5.8" fill="none" stroke="#fff" stroke-width="1" rx="0" />
<rect x="1349.4" y="169.4" width="1.8" height="1.8" fill="#fff" stroke="none" stroke-width="1" rx="0" />
<path d="M1566.70 193.00L1572.40 198.60L1578.10 193.00" fill="none" stroke="#444" stroke-width="1.5" stroke-linecap="round" stroke-linejoin="round"/>
<path d="M112.20 236.60L118.00 242.60L123.80 236.60" fill="none" stroke="#3a3a3a" stroke-width="1.5" stroke-linecap="round" stroke-linejoin="round"/>
<circle cx="143.5" cy="233.2" r="1.35" fill="#3a3a3a"/>
<circle cx="143.5" cy="238.3" r="1.35" fill="#3a3a3a"/>
<circle cx="143.5" cy="243.4" r="1.35" fill="#3a3a3a"/>
<path d="M165.6 231.4L179.2 245M179.2 231.4L165.6 245" fill="none" stroke="#c4c4c4" stroke-width="1.3" stroke-linejoin="round" stroke-linecap="round" />
<path d="M193.4 239.4L199.4 244.8L211.6 231.2" fill="none" stroke="#c4c4c4" stroke-width="1.3" stroke-linejoin="round" stroke-linecap="round" />
<path d="M1573.00 233.60L1578.80 239.60L1584.60 233.60" fill="none" stroke="#3a3a3a" stroke-width="1.5" stroke-linecap="round" stroke-linejoin="round"/>
<path d="M30.6 788.8L24.2 794.4L30.6 800" fill="none" stroke="#8a8a8a" stroke-width="1.4" stroke-linejoin="round" stroke-linecap="round" />
<path d="M65.2 788.8L71.6 794.4L65.2 800" fill="none" stroke="#8a8a8a" stroke-width="1.4" stroke-linejoin="round" stroke-linecap="round" />
<path d="M409.8 794H424.2M417 786.8V801.2" fill="none" stroke="#444" stroke-width="1.4" stroke-linejoin="round" stroke-linecap="round" />
<circle cx="961.5" cy="790.6" r="1.3" fill="#444"/>
<circle cx="961.5" cy="795.5" r="1.3" fill="#444"/>
<circle cx="961.5" cy="800.4" r="1.3" fill="#444"/>
<path d="M997.4 789.8V800.6L989.2 795.2Z" fill="#555" stroke="#555" stroke-width="1" stroke-linejoin="round" stroke-linecap="round" />
<path d="M1562 789.8V800.6L1570.6 795.2Z" fill="#555" stroke="#555" stroke-width="1" stroke-linejoin="round" stroke-linecap="round" />
<path d="M1583.4 275L1588.2 268.6L1593 275Z" fill="#707070" stroke="#707070" stroke-width="1.2" stroke-linejoin="round" stroke-linecap="round" />
<path d="M1583.4 763.4L1588.2 769.8L1593 763.4Z" fill="#707070" stroke="#707070" stroke-width="1.2" stroke-linejoin="round" stroke-linecap="round" />
</svg>
<span class="t" style="left:220.60px;top:12.50px;font-size:16.28px;color:#b2b2b2;transform:scaleX(0.8840);">Estimate (Priced) - UP Campus</span>
<span class="t" style="left:429.60px;top:12.50px;font-size:16.28px;color:#b2b2b2;transform:scaleX(1.1602);">-</span>
<span class="t" style="left:443.50px;top:12.50px;font-size:16.28px;color:#b2b2b2;transform:scaleX(0.8142);">Excel</span>
<span class="t" style="left:641.90px;top:12.50px;font-size:16.28px;color:#bababa;transform:scaleX(0.9621);">Search</span>
<span class="t" style="left:19.59px;top:62.80px;font-size:16.57px;color:#333;transform:scaleX(0.9858);">File</span>
<span class="t" style="left:150.09px;top:62.80px;font-size:16.57px;color:#333;transform:scaleX(0.9852);">Insert</span>
<span class="t" style="left:216.09px;top:62.80px;font-size:16.57px;color:#333;transform:scaleX(1.0043);">Draw</span>
<span class="t" style="left:280.09px;top:62.80px;font-size:16.57px;color:#333;transform:scaleX(0.9549);">Page Layout</span>
<span class="t" style="left:395.09px;top:62.80px;font-size:16.57px;color:#333;transform:scaleX(0.9970);">Formulas</span>
<span class="t" style="left:486.59px;top:62.80px;font-size:16.57px;color:#333;transform:scaleX(1.0092);">Data</span>
<span class="t" style="left:546.09px;top:62.80px;font-size:16.57px;color:#333;transform:scaleX(0.9542);">Review</span>
<span class="t" style="left:622.09px;top:62.80px;font-size:16.57px;color:#333;transform:scaleX(1.0060);">View</span>
<span class="t" style="left:682.09px;top:62.80px;font-size:16.57px;color:#333;transform:scaleX(1.0218);">Help</span>
<span class="t" style="left:742.09px;top:62.80px;font-size:16.57px;color:#333;transform:scaleX(0.8959);">BLUEBEAM</span>
<span class="t" style="left:848.09px;top:62.80px;font-size:16.57px;color:#333;transform:scaleX(0.9823);">PlanSwift</span>
<span class="t" style="left:77.59px;top:62.80px;font-size:16.57px;color:#242424;font-weight:700;transform:scaleX(1.0281);">Home</span>
<span class="t" style="left:1523.30px;top:61.00px;font-size:16.28px;color:#fff;transform:scaleX(0.9743);">Share</span>
<span class="t" style="left:36.26px;top:194.00px;font-size:13.52px;color:#444;transform:scaleX(1.0057);">Clipboard</span>
<span class="t" style="left:265.86px;top:194.00px;font-size:13.52px;color:#444;transform:scaleX(1.0052);">Font</span>
<span class="t" style="left:484.26px;top:194.00px;font-size:13.52px;color:#444;transform:scaleX(1.0229);">Alignment</span>
<span class="t" style="left:646.26px;top:194.00px;font-size:13.52px;color:#444;transform:scaleX(1.0085);">Number</span>
<span class="t" style="left:844.86px;top:194.00px;font-size:13.52px;color:#444;transform:scaleX(0.9395);">Styles</span>
<span class="t" style="left:1029.86px;top:194.00px;font-size:13.52px;color:#444;transform:scaleX(0.9348);">Cells</span>
<span class="t" style="left:1156.01px;top:194.00px;font-size:13.52px;color:#444;transform:scaleX(1.0038);">Editing</span>
<span class="t" style="left:1259.26px;top:194.00px;font-size:13.52px;color:#444;transform:scaleX(0.9980);">Add-ins</span>
<span class="t" style="left:1378.01px;top:194.00px;font-size:13.52px;color:#444;transform:scaleX(0.9567);">Bluebeam</span>
<span class="t" style="left:10.00px;top:230.00px;font-size:16.28px;color:#333;transform:scaleX(1.0250);">D25</span>
<span class="t" style="left:184.20px;top:264.70px;font-size:12.65px;color:#444;transform:scaleX(1.0182);">A</span>
<span class="t" style="left:516.20px;top:264.70px;font-size:12.65px;color:#444;transform:scaleX(1.0182);">B</span>
<span class="t" style="left:848.20px;top:264.70px;font-size:12.65px;color:#444;transform:scaleX(0.9399);">C</span>
<span class="t" style="left:1180.70px;top:264.70px;font-size:12.65px;color:#444;transform:scaleX(0.9399);">D</span>
<span class="t" style="left:1377.70px;top:264.70px;font-size:12.65px;color:#444;transform:scaleX(1.0182);">E</span>
<span class="t" style="left:1438.70px;top:264.70px;font-size:12.65px;color:#444;transform:scaleX(1.1108);">F</span>
<span class="t" style="left:1499.70px;top:264.70px;font-size:12.65px;color:#444;transform:scaleX(0.8727);">G</span>
<span class="t" style="left:1560.70px;top:264.70px;font-size:12.65px;color:#444;transform:scaleX(0.9399);">H</span>
<span class="t" style="left:4.50px;top:289.50px;font-size:12.79px;color:#555;transform:scaleX(0.8168);">1</span>
<span class="t" style="left:4.10px;top:317.50px;font-size:12.79px;color:#555;transform:scaleX(1.1263);">2</span>
<span class="t" style="left:4.10px;top:346.50px;font-size:12.79px;color:#555;transform:scaleX(1.1263);">3</span>
<span class="t" style="left:4.10px;top:370.50px;font-size:12.79px;color:#555;transform:scaleX(1.1263);">4</span>
<span class="t" style="left:4.10px;top:395.50px;font-size:12.79px;color:#555;transform:scaleX(1.1263);">5</span>
<span class="t" style="left:4.10px;top:416.50px;font-size:12.79px;color:#555;transform:scaleX(1.1263);">6</span>
<span class="t" style="left:4.10px;top:436.50px;font-size:12.79px;color:#555;transform:scaleX(1.1263);">7</span>
<span class="t" style="left:4.10px;top:456.50px;font-size:12.79px;color:#555;transform:scaleX(1.1263);">8</span>
<span class="t" style="left:4.10px;top:476.50px;font-size:12.79px;color:#555;transform:scaleX(1.1263);">9</span>
<span class="t" style="left:1.20px;top:495.10px;font-size:12.79px;color:#555;transform:scaleX(1.0625);">10</span>
<span class="t" style="left:1.20px;top:513.50px;font-size:12.79px;color:#555;transform:scaleX(1.1375);">11</span>
<span class="t" style="left:1.20px;top:533.50px;font-size:12.79px;color:#555;transform:scaleX(1.0625);">12</span>
<span class="t" style="left:1.20px;top:553.50px;font-size:12.79px;color:#555;transform:scaleX(1.0625);">13</span>
<span class="t" style="left:1.20px;top:573.50px;font-size:12.79px;color:#555;transform:scaleX(1.0625);">14</span>
<span class="t" style="left:1.20px;top:593.50px;font-size:12.79px;color:#555;transform:scaleX(1.0625);">15</span>
<span class="t" style="left:1.20px;top:613.50px;font-size:12.79px;color:#555;transform:scaleX(1.0625);">16</span>
<span class="t" style="left:1.20px;top:633.50px;font-size:12.79px;color:#555;transform:scaleX(1.0625);">17</span>
<span class="t" style="left:1.20px;top:653.50px;font-size:12.79px;color:#555;transform:scaleX(1.0625);">18</span>
<span class="t" style="left:1.20px;top:673.50px;font-size:12.79px;color:#555;transform:scaleX(1.0625);">19</span>
<span class="t" style="left:1.20px;top:693.50px;font-size:12.79px;color:#555;transform:scaleX(1.0625);">20</span>
<span class="t" style="left:1.20px;top:712.50px;font-size:12.79px;color:#555;transform:scaleX(1.0625);">21</span>
<span class="t" style="left:1.20px;top:730.50px;font-size:12.79px;color:#555;transform:scaleX(1.0625);">22</span>
<span class="t" style="left:1.20px;top:749.50px;font-size:12.79px;color:#555;transform:scaleX(1.0625);">23</span>
<span class="t" style="left:1.20px;top:768.50px;font-size:12.79px;color:#555;clip-path:inset(0 0 5.69px 0);transform:scaleX(1.0625);">24</span>
<span class="t" style="left:612.90px;top:284.30px;font-size:14.53px;color:#fff;font-weight:700;transform:scaleX(1.0070);">PROJECT SUMMARY</span>
<span class="t" style="left:25.90px;top:310.00px;font-size:16.28px;color:#000;font-weight:700;transform:scaleX(1.0055);">Project Name:</span>
<span class="t" style="left:25.90px;top:338.50px;font-size:16.28px;color:#000;font-weight:700;transform:scaleX(0.9768);">Location:</span>
<span class="t" style="left:25.90px;top:365.00px;font-size:16.28px;color:#000;font-weight:700;transform:scaleX(0.9779);">Client:</span>
<span class="t" style="left:25.90px;top:389.00px;font-size:16.28px;color:#000;font-weight:700;transform:scaleX(1.0320);">Date:</span>
<span class="t" style="left:736.50px;top:310.00px;font-size:18.17px;color:#000;font-weight:700;transform:scaleX(1.0282);">UP CAMPUS AT 16TH AVE</span>
<span class="t" style="left:610.49px;top:339.00px;font-size:18.31px;color:#000;font-weight:700;transform:scaleX(1.0587);">82-88 EAST 16TH AVENUE, COLUMBUS, OHIO 43201</span>
<span class="t" style="left:812.14px;top:390.00px;font-size:15.70px;color:#000;font-weight:700;transform:scaleX(1.1709);">1/12/2026</span>
<span class="t" style="left:589.18px;top:413.40px;font-size:14.83px;color:#fff;font-weight:700;transform:scaleX(0.9721);">General Project Information:</span>
<span class="t" style="left:583.26px;top:455.00px;font-size:13.37px;color:#000;font-weight:700;transform:scaleX(0.8827);">PROJECT SCOPE</span>
<span class="t" style="left:987.96px;top:454.20px;font-size:13.37px;color:#000;transform:scaleX(0.8240);">CONCRETE</span>
<span class="t" style="left:645.26px;top:494.20px;font-size:13.37px;color:#000;transform:scaleX(0.9658);">DIV.03</span>
<span class="t" style="left:645.26px;top:512.90px;font-size:13.37px;color:#000;transform:scaleX(0.9658);">DIV.32</span>
<span class="t" style="left:688.96px;top:494.20px;font-size:13.37px;color:#000;transform:scaleX(0.8200);">CONCRETE</span>
<span class="t" style="left:688.96px;top:512.90px;font-size:13.37px;color:#000;transform:scaleX(0.8691);">EXTERIOR IMPROVEMENTS</span>
<span class="t" style="left:1027.03px;top:494.20px;font-size:13.95px;color:#000;transform:scaleX(1.1248);">$</span>
<span class="t" style="left:1027.03px;top:512.90px;font-size:13.95px;color:#000;transform:scaleX(1.1248);">$</span>
<span class="t" style="left:1286.30px;top:495.50px;font-size:12.79px;color:#000;transform:scaleX(1.0445);">46,541.90</span>
<span class="t" style="left:1286.30px;top:514.00px;font-size:12.79px;color:#000;transform:scaleX(1.0445);">22,312.67</span>
<span class="t" style="left:589.30px;top:552.30px;font-size:12.79px;color:#000;font-weight:700;transform:scaleX(0.9437);">BASE BID COST</span>
<span class="t" style="left:1024.73px;top:552.30px;font-size:13.95px;color:#000;font-weight:700;transform:scaleX(1.0991);">$</span>
<span class="t" style="left:602.30px;top:572.30px;font-size:12.79px;color:#000;font-weight:700;transform:scaleX(0.9700);">ALTERNATES</span>
<span class="t" style="left:1024.73px;top:572.30px;font-size:13.95px;color:#000;font-weight:700;transform:scaleX(1.0991);">$</span>
<span class="t" style="left:532.30px;top:592.30px;font-size:12.79px;color:#000;font-weight:700;transform:scaleX(0.9697);">GENERAL ALLOWANCES</span>
<span class="t" style="left:1024.73px;top:592.30px;font-size:13.95px;color:#000;font-weight:700;transform:scaleX(1.0991);">$</span>
<span class="t" style="left:550.30px;top:612.30px;font-size:12.79px;color:#000;font-weight:700;transform:scaleX(0.9843);">OVERHEAD &amp; PROFIT</span>
<span class="t" style="left:1024.73px;top:612.30px;font-size:13.95px;color:#000;font-weight:700;transform:scaleX(1.0991);">$</span>
<span class="t" style="left:608.30px;top:632.30px;font-size:12.79px;color:#000;font-weight:700;transform:scaleX(0.9937);">INSURANCE</span>
<span class="t" style="left:1024.73px;top:632.30px;font-size:13.95px;color:#000;font-weight:700;transform:scaleX(1.0991);">$</span>
<span class="t" style="left:590.30px;top:652.30px;font-size:12.79px;color:#000;font-weight:700;transform:scaleX(0.9900);">CONTINGENCY</span>
<span class="t" style="left:1024.73px;top:652.30px;font-size:13.95px;color:#000;font-weight:700;transform:scaleX(1.0991);">$</span>
<span class="t" style="left:570.30px;top:672.30px;font-size:12.79px;color:#fff;font-weight:700;transform:scaleX(0.9746);">TOTAL PROPOSAL</span>
<span class="t" style="left:1024.73px;top:672.30px;font-size:13.95px;color:#fff;font-weight:700;transform:scaleX(1.0991);">$</span>
<span class="t" style="left:1283.31px;top:553.10px;font-size:12.50px;color:#000;font-weight:700;transform:scaleX(1.0983);">68,854.57</span>
<span class="t" style="left:1283.31px;top:613.10px;font-size:12.50px;color:#000;font-weight:700;transform:scaleX(1.0983);">13,770.91</span>
<span class="t" style="left:1283.31px;top:673.10px;font-size:12.50px;color:#fff;font-weight:700;transform:scaleX(1.0983);">82,625.48</span>
<span class="t" style="left:839.81px;top:613.00px;font-size:12.50px;color:#000;font-weight:700;transform:scaleX(1.0337);">20%</span>
<span class="t" style="left:842.81px;top:633.00px;font-size:12.50px;color:#000;font-weight:700;transform:scaleX(1.0441);">0%</span>
<span class="t" style="left:842.81px;top:653.00px;font-size:12.50px;color:#000;font-weight:700;transform:scaleX(1.0441);">0%</span>
<span class="t" style="left:142.84px;top:784.60px;font-size:17.44px;color:#222;transform:scaleX(0.9920);">SUMMARY</span>
<span class="t" style="left:262.04px;top:788.40px;font-size:17.44px;color:#1a1a1a;transform:scaleX(0.9187);">ESTIMATE</span>
<span class="t" style="left:27.55px;top:143.20px;font-size:15.41px;color:#333;transform:scaleX(0.8957);">Paste</span>
<span class="t" style="left:155.10px;top:109.60px;font-size:16.28px;color:#333;transform:scaleX(0.9063);">Calibri</span>
<span class="t" style="left:310.60px;top:109.60px;font-size:16.28px;color:#333;transform:scaleX(0.8875);">11</span>
<span class="t" style="left:368.99px;top:104.30px;font-size:23.84px;color:#444;transform:scaleX(1.0199);">A</span>
<span class="t" style="left:403.96px;top:109.30px;font-size:18.90px;color:#444;transform:scaleX(1.0372);">A</span>
<span class="t" style="left:162.94px;top:148.70px;font-size:17.44px;color:#3a3a3a;font-weight:700;transform:scaleX(0.8749);">B</span>
<span class="t" style="left:195.99px;top:147.70px;font-size:18.32px;color:#3a3a3a;font-style:italic;font-family:'Liberation Serif',serif;transform:scaleX(1.6066);">I</span>
<span class="t" style="left:227.06px;top:148.40px;font-size:17.15px;color:#3a3a3a;transform:scaleX(0.9190);">U</span>
<span class="t" style="left:386.63px;top:145.80px;font-size:19.48px;color:#444;transform:scaleX(1.0417);">A</span>
<span class="t" style="left:552.54px;top:97.20px;font-size:12.00px;color:#444;transform:scaleX(1.1767);">ab</span>
<span class="t" style="left:552.74px;top:106.20px;font-size:12.00px;color:#444;transform:scaleX(1.0867);">c</span>
<span class="t" style="left:626.74px;top:100.60px;font-size:15.70px;color:#333;transform:scaleX(0.8910);">General</span>
<span class="t" style="left:632.90px;top:130.30px;font-size:21.80px;color:#444;transform:scaleX(0.9483);">$</span>
<span class="t" style="left:679.70px;top:130.00px;font-size:23.55px;color:#444;transform:scaleX(1.0168);">%</span>
<span class="t" style="left:642.36px;top:161.80px;font-size:11.63px;color:#444;transform:scaleX(1.0016);">0</span>
<span class="t" style="left:635.76px;top:172.00px;font-size:11.63px;color:#444;transform:scaleX(1.0109);">00</span>
<span class="t" style="left:668.36px;top:161.80px;font-size:11.63px;color:#444;transform:scaleX(1.0264);">00</span>
<span class="t" style="left:674.96px;top:172.00px;font-size:11.63px;color:#444;transform:scaleX(1.0325);">0</span>
<span class="t" style="left:787.64px;top:101.00px;font-size:15.70px;color:#333;transform:scaleX(0.9810);">Conditional Formatting</span>
<span class="t" style="left:787.64px;top:133.60px;font-size:15.70px;color:#333;transform:scaleX(0.9371);">Format as Table</span>
<span class="t" style="left:787.64px;top:166.00px;font-size:15.70px;color:#333;transform:scaleX(0.8936);">Cell Styles</span>
<span class="t" style="left:1018.14px;top:101.00px;font-size:15.70px;color:#333;transform:scaleX(0.9616);">Insert</span>
<span class="t" style="left:1018.14px;top:133.60px;font-size:15.70px;color:#333;transform:scaleX(0.9420);">Delete</span>
<span class="t" style="left:1018.14px;top:166.00px;font-size:15.70px;color:#333;transform:scaleX(0.9807);">Format</span>
<span class="t" style="left:1187.99px;top:97.20px;font-size:11.05px;color:#2b88d8;font-weight:700;transform:scaleX(1.0790);">A</span>
<span class="t" style="left:1188.19px;top:108.60px;font-size:11.05px;color:#444;font-weight:700;transform:scaleX(1.1874);">Z</span>
<span class="t" style="left:1256.60px;top:141.00px;font-size:16.28px;color:#333;transform:scaleX(0.9752);">Add-ins</span>
<span class="t" style="left:1362.89px;top:101.00px;font-size:15.70px;color:#333;transform:scaleX(0.8871);">Create PDF</span>
<span class="t" style="left:1362.89px;top:133.60px;font-size:15.70px;color:#333;transform:scaleX(0.9351);">Change Settings</span>
<span class="t" style="left:1362.89px;top:166.00px;font-size:15.70px;color:#333;transform:scaleX(0.8895);">Batch PDF</span>
<span class="t" style="left:223.34px;top:227.40px;font-size:21.00px;color:#2a2a2a;font-style:italic;font-family:'Liberation Serif',serif;transform:scaleX(1.7814);">f</span>
<span class="t" style="left:232.06px;top:230.40px;font-size:17.00px;color:#2a2a2a;font-style:italic;font-family:'Liberation Serif',serif;transform:scaleX(1.4138);">x</span>
</div></body></html>
